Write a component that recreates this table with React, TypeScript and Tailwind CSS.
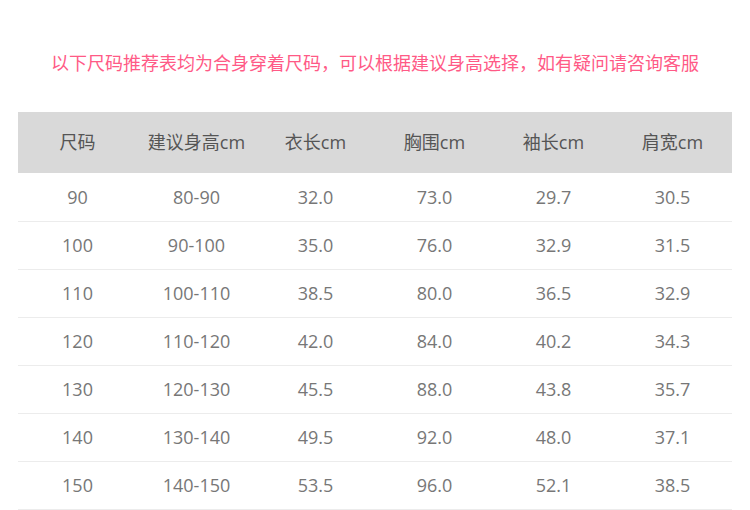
const headers = ['尺码', '建议身高cm', '衣长cm', '胸围cm', '袖长cm', '肩宽cm']

const rows = [
  ['90', '80-90', '32.0', '73.0', '29.7', '30.5'],
  ['100', '90-100', '35.0', '76.0', '32.9', '31.5'],
  ['110', '100-110', '38.5', '80.0', '36.5', '32.9'],
  ['120', '110-120', '42.0', '84.0', '40.2', '34.3'],
  ['130', '120-130', '45.5', '88.0', '43.8', '35.7'],
  ['140', '130-140', '49.5', '92.0', '48.0', '37.1'],
  ['150', '140-150', '53.5', '96.0', '52.1', '38.5'],
]

const App = () => {
  return (
    <div className="w-[750px] h-[510px] bg-white overflow-hidden font-['Open_Sans','Noto_Sans_CJK_SC',sans-serif]">
      {/* Notice */}
      <div className="pt-[49px] h-[112px] text-center text-[18px] leading-[28px] text-[#ff5a86]">
        以下尺码推荐表均为合身穿着尺码，可以根据建议身高选择，如有疑问请咨询客服
      </div>

      {/* Size table */}
      <div className="mx-[18px] w-[714px]">
        <div className="grid grid-cols-6 h-[61px] mb-px items-center bg-[#d9d9d9] text-[18px] text-[#555]">
          {headers.map((h) => (
            <div key={h} className="text-center">
              {h}
            </div>
          ))}
        </div>
        {rows.map((r) => (
          <div key={r[0]} className="grid grid-cols-6 h-[48px] items-center border-b border-[#ececec] text-[18px] text-[#777]">
            {r.map((c, i) => (
              <div key={i} className="text-center">
                {c}
              </div>
            ))}
          </div>
        ))}
      </div>
    </div>
  )
}

export default App
